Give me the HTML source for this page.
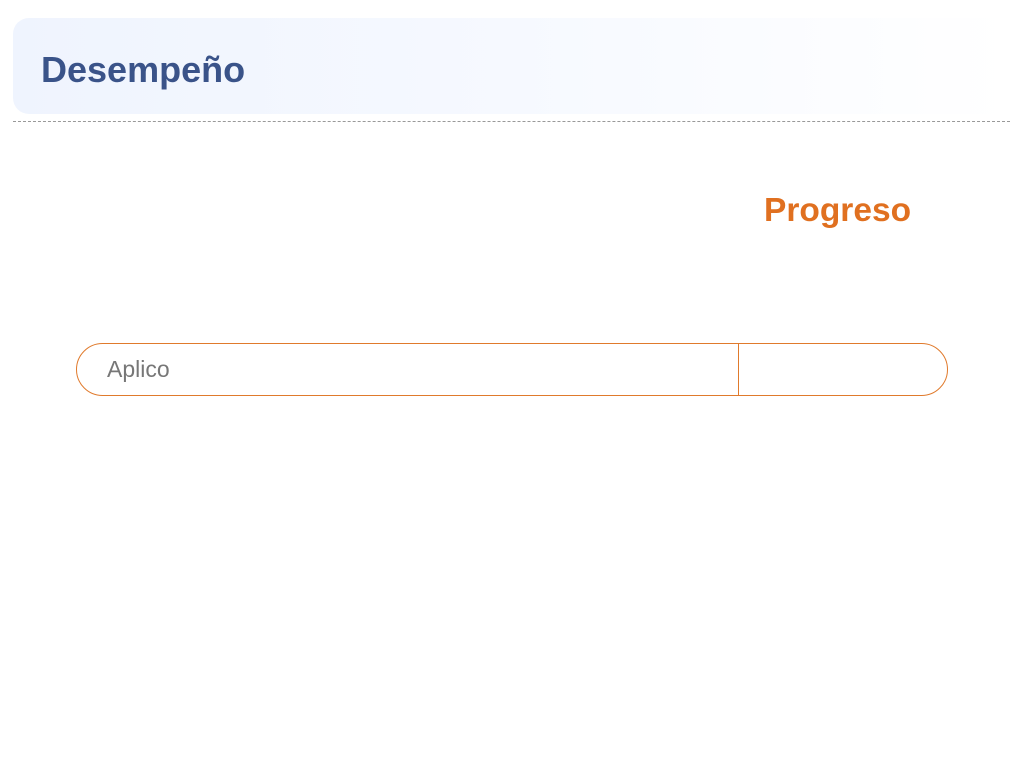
<!DOCTYPE html>
<html><head><meta charset="utf-8"><style>
html,body{margin:0;padding:0;width:1024px;height:768px;background:#fff;overflow:hidden;font-family:"Liberation Sans",Arial,sans-serif;}
.hdr{position:absolute;left:13px;top:18px;width:997px;height:96px;border-radius:16px;background:linear-gradient(90deg,#eff4fe 0%,#f6f9ff 50%,#ffffff 100%);}
.hdr h1{position:absolute;left:28px;top:32px;margin:0;font-size:36px;line-height:40px;font-weight:bold;color:#3a5389;}
.dash{position:absolute;left:13px;top:121px;width:997px;border-top:1px dashed #999;}
.prog{position:absolute;left:764px;top:192px;font-size:33.5px;line-height:38px;font-weight:bold;color:#e07020;}
.pill{position:absolute;left:76px;top:343px;width:870px;height:51px;border:1px solid #e07a2c;border-radius:27px;}
.pill span{position:absolute;left:30px;top:12px;font-size:23px;line-height:26px;color:#777;}
.div{position:absolute;left:661px;top:0;height:51px;border-left:1px solid #e07a2c;}
</style></head><body>
<div class="hdr"><h1>Desempeño</h1></div>
<div class="dash"></div>
<div class="prog">Progreso</div>
<div class="pill"><span>Aplico</span><div class="div"></div></div>
</body></html>
